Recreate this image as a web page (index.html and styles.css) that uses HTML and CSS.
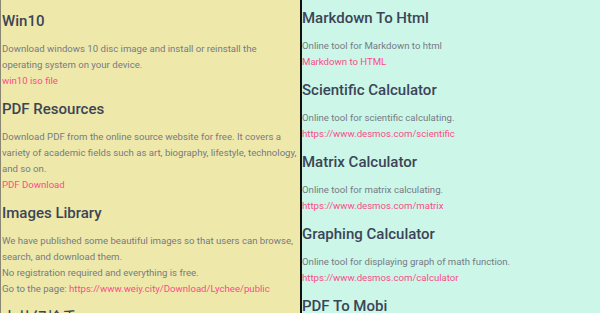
FILE: index.html
```html
<!DOCTYPE html>
<html lang="en">
<head>
  <meta charset="UTF-8">
  <meta name="viewport" content="width=device-width, initial-scale=1.0">
  <title>Resources</title>
  <link rel="stylesheet" href="styles.css">
</head>
<body>

  <div class="board">
    <div class="column column-left">
      <div class="item">
        <h3>Win10</h3>
        <p>
          Download windows 10 disc image and install or reinstall the operating system on your device.
          <br>
          <a href="#">win10 iso file</a>
        </p>
      </div>
      <div class="item">
        <h3>PDF Resources</h3>
        <p>
          Download PDF from the online source website for free. It covers a variety of academic fields such as art, biography, lifestyle, technology, and so on.
          <br>
          <a href="#">PDF Download</a>
        </p>
      </div>
      <div class="item">
        <h3>Images Library</h3>
        <p>
          We have published some beautiful images so that users can browse, search, and download them.
          <br>
          No registration required and everything is free.
          <br>
          Go to the page: <a href="#">https://www.weiy.city/Download/Lychee/public</a>
        </p>
      </div>
      <div class="item">
        <h3 class="cjk">中共纪检委</h3>
      </div>
    </div>

    <div class="column column-right">
      <div class="item">
        <h3>Markdown To Html</h3>
        <p>
          Online tool for Markdown to html
          <br>
          <a href="#">Markdown to HTML</a>
        </p>
      </div>
      <div class="item">
        <h3>Scientific Calculator</h3>
        <p>
          Online tool for scientific calculating.
          <br>
          <a href="#">https://www.desmos.com/scientific</a>
        </p>
      </div>
      <div class="item">
        <h3>Matrix Calculator</h3>
        <p>
          Online tool for matrix calculating.
          <br>
          <a href="#">https://www.desmos.com/matrix</a>
        </p>
      </div>
      <div class="item">
        <h3>Graphing Calculator</h3>
        <p>
          Online tool for displaying graph of math function.
          <br>
          <a href="#">https://www.desmos.com/calculator</a>
        </p>
      </div>
      <div class="item">
        <h3>PDF To Mobi</h3>
      </div>
    </div>
  </div>

</body>
</html>
```

FILE: styles.css
```css
body {
  font-family: 'Roboto', 'Noto Sans CJK SC', sans-serif;
  margin: 0;
  height: 313px;
  overflow: hidden;
}

.board {
  display: flex;
  height: 100%;
}

.column {
  width: 50%;
  box-sizing: border-box;
  overflow: hidden;
}

.column-left {
  background-color: #eee8aa;
  border-left: 1px solid #8a8672;
  padding: 3px 1px 0 1px;
}

.column-right {
  background-color: #ccf6e8;
  border-left: 2px solid #111;
  padding: 0;
}

.item h3 {
  font-size: 15px;
  font-weight: 500;
  line-height: 18px;
  color: #3b4556;
  margin: 9px 0 11px 0;
}

.item p {
  font-size: 9.6px;
  font-weight: 400;
  line-height: 16px;
  color: #767b84;
  margin: 0 0 11px 0;
}

.item a {
  color: #fa4d88;
  text-decoration: none;
}

.cjk {
  font-family: 'Noto Sans CJK SC', sans-serif;
}
```
